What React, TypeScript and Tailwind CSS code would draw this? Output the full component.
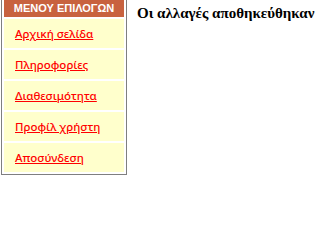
import React from 'react';

const links = ['Αρχική σελίδα', 'Πληροφορίες', 'Διαθεσιμότητα', 'Προφίλ χρήστη', 'Αποσύνδεση'];

const App = () => {
  return (
    <div className="flex items-start bg-white min-h-[217px]">
      <div className="shrink-0 ml-[1px] w-[126px] border-x border-b border-[#7f7f7f] px-[2px] pb-[2px] flex flex-col gap-[2px]">
        <div
          className="h-[17px] bg-[#c8623f] text-white text-[11px] font-bold text-center leading-[17px]"
          style={{ fontFamily: '"Liberation Sans", Arial, sans-serif' }}
        >
          ΜΕΝΟΥ ΕΠΙΛΟΓΩΝ
        </div>
        {links.map((label) => (
          <div key={label} className="h-[29px] bg-[#ffffcc] flex items-center pl-[11px]">
            <a
              href="#"
              className="text-[#ff0000] underline text-[11.5px] font-medium"
              style={{ fontFamily: '"Noto Sans", sans-serif' }}
            >
              {label}
            </a>
          </div>
        ))}
      </div>
      <h1
        className="ml-[10px] mt-[2px] whitespace-nowrap text-[15px] font-bold text-black"
        style={{ fontFamily: '"Liberation Serif", serif' }}
      >
        Οι αλλαγές αποθηκεύθηκαν
      </h1>
    </div>
  );
};

export default App;
